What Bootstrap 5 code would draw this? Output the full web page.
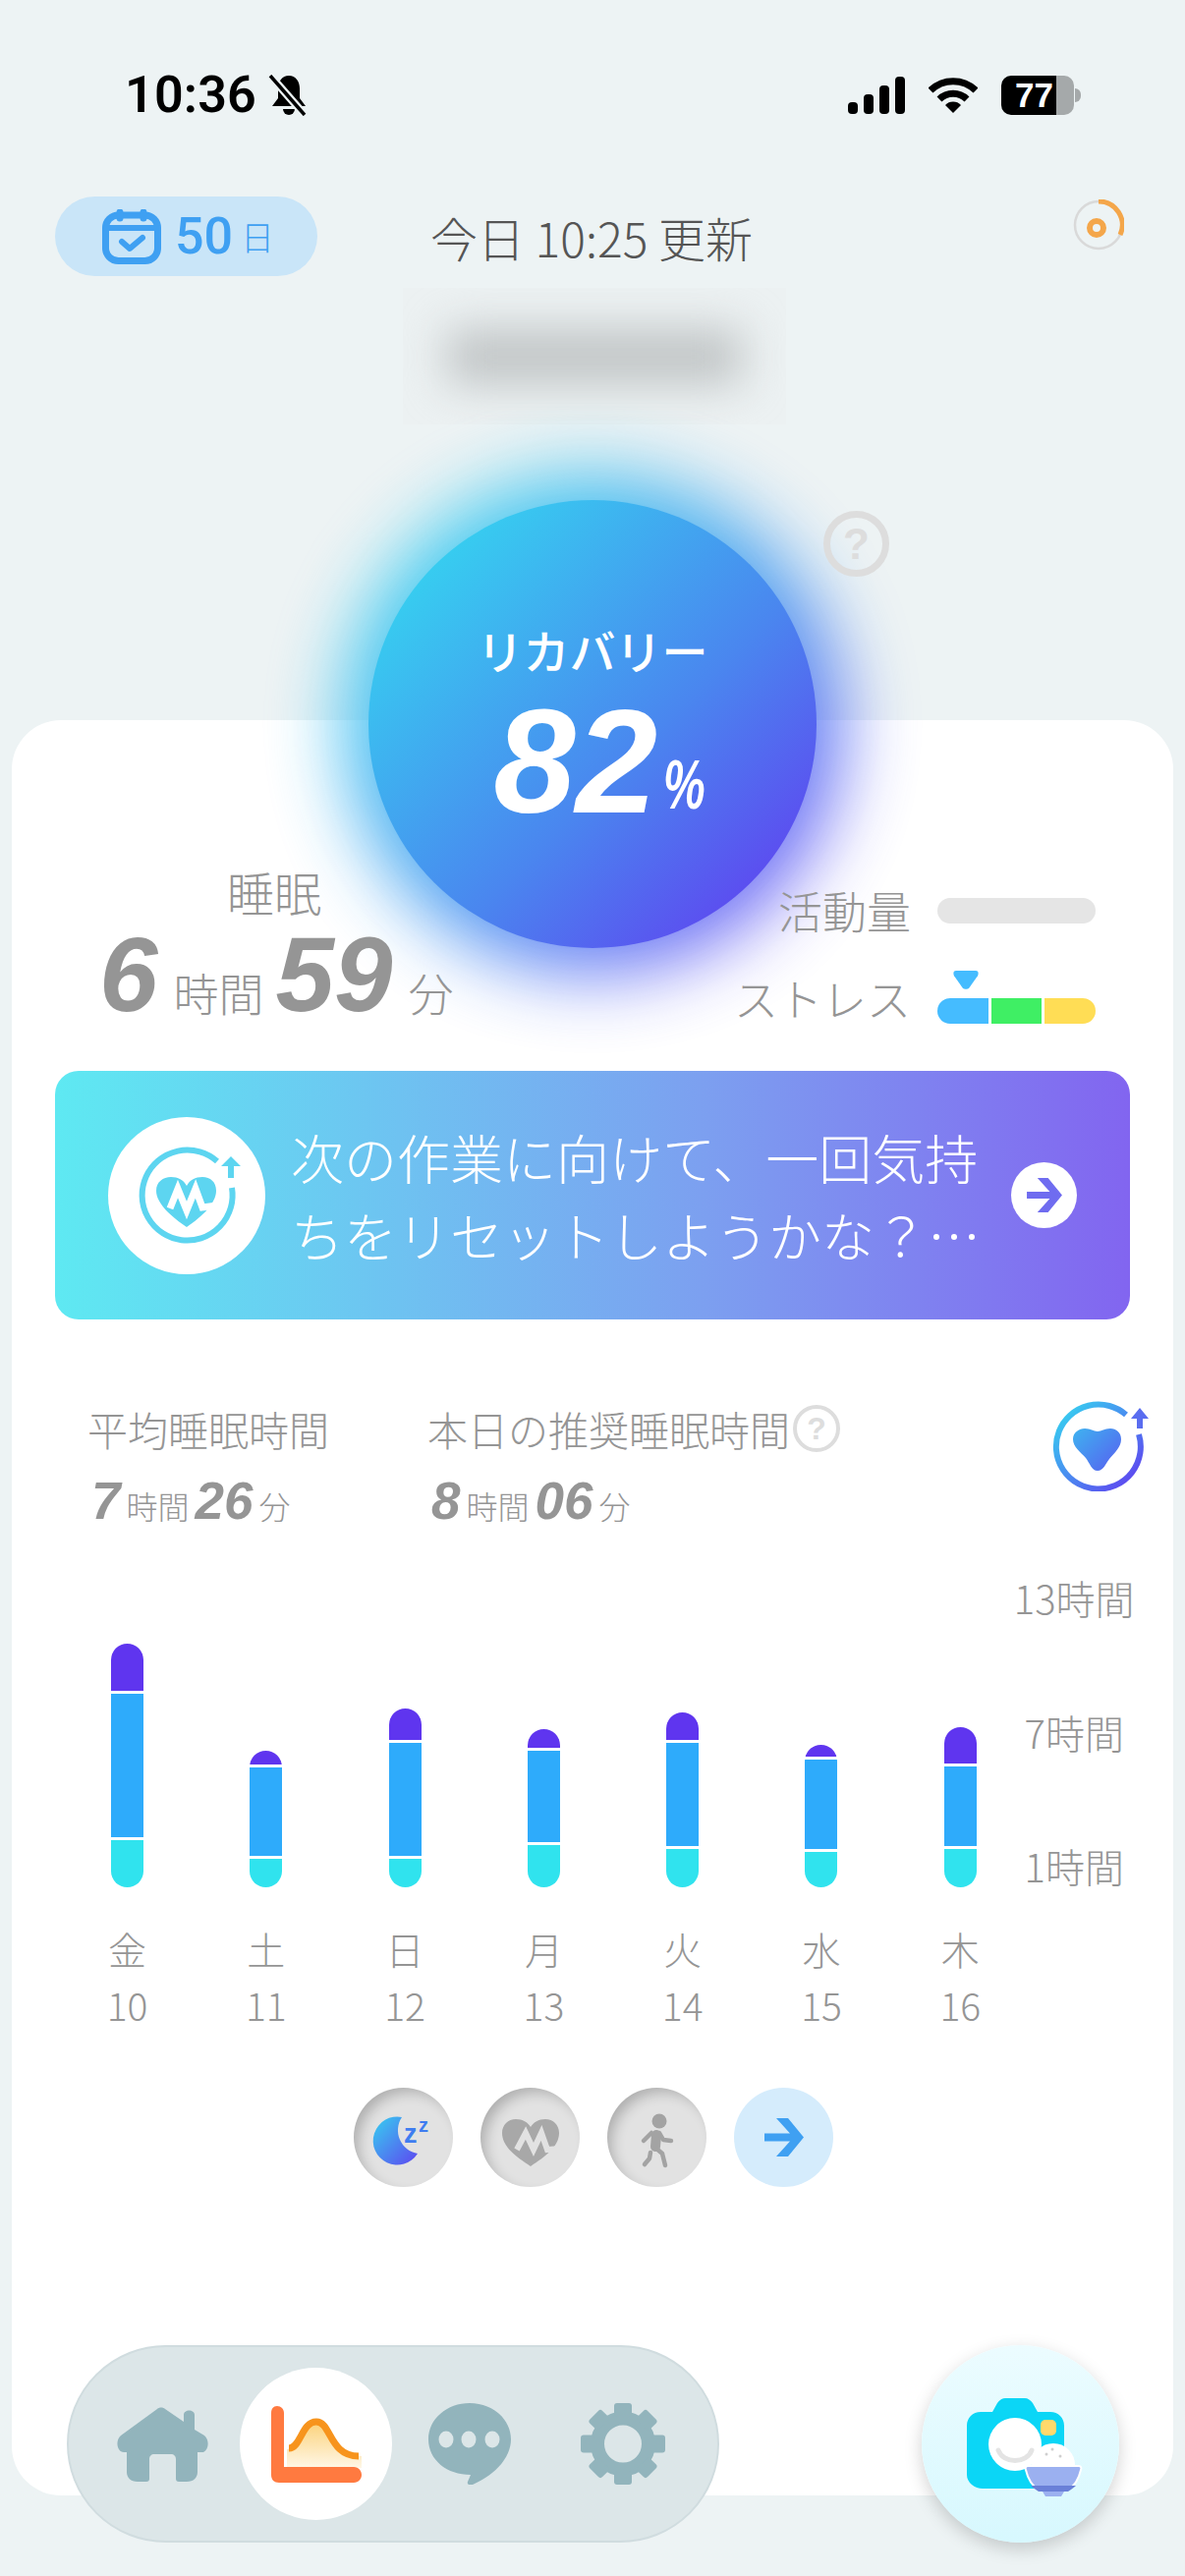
<!DOCTYPE html>
<html lang="ja">
<head>
  <meta charset="UTF-8">
  <title>リカバリー</title>
  <meta name="viewport" content="width=device-width, initial-scale=1">
  <link href="https://cdn.jsdelivr.net/npm/bootstrap@5.3.3/dist/css/bootstrap.min.css" rel="stylesheet">
  <style>
    body {
      width: 1206px;
      height: 2622px;
      overflow: hidden;
      background: #edf3f4;
      font-family: "Noto Sans CJK JP", "Noto Sans", sans-serif;
      font-weight: 300;
      color: #959595;
    }
    .page-shell { position: relative; width: 1206px; height: 2622px; overflow: hidden; }

    /* status bar */
    .status-row { height: 40px; margin-top: 77px; padding: 0 106px 0 127px; color: #000; }
    .status-time { font: 600 52px/40px Roboto, sans-serif; letter-spacing: .2px; color: #000; }
    .batt-box {
      width: 74px; height: 40px; border-radius: 10px; padding-left: 14px;
      background: linear-gradient(90deg, #000 76%, #a5a9aa 76%);
      font: 700 35px/40px "Liberation Sans", sans-serif; color: #fff;
    }
    .batt-nub { width: 6px; height: 14px; margin-left: 1px; border-radius: 0 6px 6px 0; background: #a5a9aa; }
    .bell-mark { margin-left: 12px; }

    /* top row */
    .top-row { height: 81px; margin-top: 83px; padding-left: 56px; }
    .day-pill { width: 267px; height: 81px; background: #c9e5f8; color: #3fa0f2; padding-left: 48px; }
    .day-num { font: 500 52px/1 Roboto, sans-serif; margin-left: 14px; }
    .day-unit { font-size: 34px; line-height: 1; margin-left: 8px; font-weight: 300; }
    .updated-text { font-size: 48px; line-height: 1; color: #555; margin-left: 115px; }
    .sync-ring { margin-left: auto; margin-right: 62px; align-self: flex-start; margin-top: 3px; }

    /* blurred name */
    .name-patch { width: 390px; height: 139px; margin: 12px 0 0 410px; background: #ecf1f2; overflow: hidden; }
    .name-blur { width: 300px; height: 56px; margin: 42px 0 0 45px; background: #c0c4c5; filter: blur(22px); }

    /* recovery disc */
    .hero-glow {
      position: absolute; left: 349px; top: 483px; width: 508px; height: 508px; border-radius: 50%;
      background: linear-gradient(135deg, #36d6f0 10%, #3f9df0 50%, #6a4cf5 90%);
      filter: blur(38px);
      opacity: .92;
    }
    .hero-disc {
      position: absolute; left: 375px; top: 509px; width: 456px; height: 456px;
      background: linear-gradient(135deg, #36d0f0 12%, #4a86ef 58%, #5e46f0 90%);
      color: #fff;
    }
    .hero-title { font-size: 47px; line-height: 1; font-weight: 500; margin-top: 128px; }
    .hero-value { font: italic 700 150px/1 "Liberation Sans", sans-serif; margin-top: 16px; padding-left: 14px; }
    .hero-percent { display: inline-block; font: italic 700 48px/1 "Liberation Sans", sans-serif; margin-left: 6px; transform: scaleY(1.45); transform-origin: bottom; }
    .help-mark {
      position: absolute; left: 838px; top: 520px; width: 67px; height: 67px;
      border: 7px solid #ddd; color: #ddd; font: 700 44px/1 "Liberation Sans", sans-serif;
    }

    /* main sheet */
    .main-sheet {
      position: relative; width: 1182px; height: 1807px; margin: 301px 0 0 12px;
      padding: 156px 44px 0; background: #fff; border-radius: 50px;
    }
    .stats-row { position: relative; z-index: 3; height: 201px; }
    .sleep-box { margin-left: 45px; width: 370px; margin-top: -6px; }
    .sleep-title { font-size: 48px; line-height: 48px; padding-right: 14px; margin-bottom: 9px; }
    .big-num { font: italic 700 107px/104px "Liberation Sans", sans-serif; }
    .big-unit { font-size: 46px; line-height: 1; margin: 0 12px 0 16px; white-space: nowrap; }
    .side-box { margin-right: 35px; padding-top: 15px; }
    .side-label { font-size: 45px; line-height: 46px; }
    .side-track { width: 161px; height: 26px; margin-left: 27px; }
    .track-blank { background: #e5e5e5; }
    .stress-row { margin-top: 40px; position: relative; }
    .stress-bar { overflow: hidden; gap: 3px; margin-top: 26px; }
    .stress-bar span { flex: 1; }
    .stress-pin { position: absolute; left: 223px; top: -2px; }

    /* advice banner */
    .advice-banner {
      height: 253px; padding: 0 54px; border-radius: 24px; color: #fff;
      background: linear-gradient(90deg, #5ee9f2, #7ca0f0 60%, #8265f0);
    }
    .advice-mark { width: 160px; height: 160px; flex: none; background: #fff; }
    .advice-text { width: 706px; margin-left: 26px; font-size: 54px; line-height: 79px; white-space: nowrap; }
    .advice-go { width: 67px; height: 67px; margin-left: 28px; flex: none; background: #fff; }

    /* sleep summary */
    .summary-row { height: 180px; margin-top: 87px; padding-left: 33px; }
    .summary-col-a { width: 346px; }
    .summary-head { font-size: 41px; line-height: 48px; white-space: nowrap; }
    .summary-help {
      width: 48px; height: 48px; margin-left: 3px; border: 4px solid #ddd; color: #ddd;
      font: 700 32px/1 "Liberation Sans", sans-serif;
    }
    .summary-vals { margin-top: 25px; margin-left: 4px; height: 50px; }
    .mid-num { font: italic 700 53px/50px "Liberation Sans", sans-serif; }
    .mid-unit { font-size: 32px; line-height: 1; margin: 0 6px; }
    .summary-heart { position: absolute; left: 1058px; top: 692px; }

    /* chart */
    .day-cols { margin-left: 57px; gap: 108.3px; }
    .day-col { width: 33px; }
    .bar-slot { height: 311px; }
    .sleep-bar { width: 33px; gap: 3px; border-radius: 17px; overflow: hidden; }
    .bar-deep { background: #5f35ef; }
    .bar-light { background: #2eabfb; }
    .bar-wake { background: #30e3ee; }
    .day-label { margin-top: 34px; font-size: 39px; line-height: 57px; white-space: nowrap; }
    .hour-col { width: 124px; margin-left: 38px; margin-top: -4px; gap: 96.5px; font-size: 40px; line-height: 40px; white-space: nowrap; }

    /* metric buttons */
    .metric-row { gap: 28px; margin-top: 56px; padding-left: 2px; }
    .metric-btn { width: 101px; height: 101px; background: #e2e2e2; box-shadow: inset 7px 7px 14px -3px rgba(0,0,0,.24); }
    .metric-next { background: #d5ecfc; box-shadow: none; }

    /* dock */
    .dock-row { position: relative; z-index: 4; margin-top: -153px; padding: 0 67px 0 68px; }
    .tab-dock { width: 664px; height: 201px; background: #dce6e8; border: 2px solid #d0dcdf; padding-left: 49px; }
    .tab-item { width: 155px; height: 155px; flex: none; margin-left: -1px; }
    .tab-active { background: #fff; }
    .tab-first { width: 96px; margin-left: 0; margin-right: 30px; justify-content: flex-start !important; }
    .tab-chat { margin-left: 37px; }
    .tab-gear { margin-left: 71px; }
    .camera-btn {
      width: 201px; height: 201px; padding: 54px 0 0 45px;
      background: linear-gradient(180deg, #ecfcff, #d7f8fe);
      box-shadow: 0 6px 18px rgba(0,0,0,.18);
    }
  </style>
</head>
<body>
<div class="page-shell">

  <!-- status bar -->
  <div class="status-row d-flex align-items-center">
    <span class="status-time">10:36</span>
    <svg class="bell-mark" width="42" height="42" viewBox="0 0 42 42">
      <path d="M21 1c-7 0-11 6-11 13v10l-6 8h34l-6-8V14c0-7-4-13-11-13z" fill="#000"/>
      <path d="M15 35h12a6 6 0 0 1-12 0z" fill="#000"/>
      <path d="M3 2l34 39" stroke="#edf3f4" stroke-width="8"/>
      <path d="M2 1l35 40" stroke="#000" stroke-width="3.500"/>
    </svg>
    <div class="ms-auto d-flex align-items-center">
      <svg width="58" height="38" viewBox="0 0 58 38">
        <rect x="0" y="26" width="10" height="12" rx="4"/>
        <rect x="16" y="18" width="10" height="20" rx="4"/>
        <rect x="32" y="9" width="10" height="29" rx="4"/>
        <rect x="48" y="0" width="10" height="38" rx="4"/>
      </svg>
      <svg class="ms-4" width="50" height="38" viewBox="0 0 50 38" fill="none" stroke="#000" stroke-width="7">
        <path d="M2 14a33 33 0 0 1 46 0"/>
        <path d="M11 23a20 20 0 0 1 28 0"/>
        <path d="M25 37l-8-8a11 11 0 0 1 16 0z" fill="#000" stroke="none"/>
      </svg>
      <div class="batt-box ms-4">77</div>
      <div class="batt-nub"></div>
    </div>
  </div>

  <!-- streak and updated time -->
  <div class="top-row d-flex align-items-center">
    <div class="day-pill rounded-pill d-flex align-items-center">
      <svg width="60" height="56" viewBox="0 0 60 56" fill="none" stroke="#3fa0f2" stroke-width="7" stroke-linecap="round" stroke-linejoin="round">
        <rect x="3.5" y="6" width="53" height="46.500" rx="13"/>
        <path d="M3.500 19h53" stroke-width="6"/>
        <path d="M18 3v6M42 3v6" stroke-width="7"/>
        <path d="M20 33l8 7 13-11" stroke-width="6"/>
      </svg>
      <span class="day-num">50</span><span class="day-unit">日</span>
    </div>
    <div class="updated-text">今日 10:25 更新</div>
    <svg class="sync-ring" width="52" height="52" viewBox="0 0 52 52" fill="none">
      <circle cx="26" cy="26" r="24" stroke="#d9d9d9" stroke-width="2.500"/>
      <path d="M26 2a24 24 0 0 1 22 34" stroke="#f4a64a" stroke-width="5"/>
      <circle cx="24" cy="29" r="7" stroke="#f4a64a" stroke-width="6"/>
    </svg>
  </div>

  <!-- blurred name -->
  <div class="name-patch"><div class="name-blur"></div></div>

  <!-- recovery sheet -->
  <div class="main-sheet">
    <div class="stats-row d-flex justify-content-between">
      <div class="sleep-box text-center">
        <div class="sleep-title">睡眠</div>
        <div class="d-flex align-items-baseline">
          <span class="big-num">6</span><span class="big-unit">時間</span><span class="big-num">59</span><span class="big-unit">分</span>
        </div>
      </div>
      <div class="side-box">
        <div class="d-flex align-items-center justify-content-end">
          <span class="side-label">活動量</span>
          <div class="side-track track-blank rounded-pill"></div>
        </div>
        <div class="stress-row d-flex align-items-center justify-content-end">
          <span class="side-label">ストレス</span>
          <div class="side-track stress-bar rounded-pill d-flex">
            <span style="background:#45bcff"></span><span style="background:#3fef64"></span><span style="background:#ffdd55"></span>
          </div>
          <svg class="stress-pin" width="26" height="19" viewBox="0 0 26 18" preserveAspectRatio="none"><path d="M3 0h20c3 0 3 3 2 5l-9 12c-1 1-5 1-6 0L1 5C0 3 0 0 3 0z" fill="#45bcff"/></svg>
        </div>
      </div>
    </div>

    <div class="advice-banner d-flex align-items-center">
      <div class="advice-mark rounded-circle">
        <svg width="160" height="160" viewBox="0 0 160 160" fill="none">
          <path d="M111 45A46 46 0 1 0 126 72" stroke="#5dd5f0" stroke-width="6"/>
          <path d="M80 112C65 102 49 88 49 75c0-9 7-14 15-14 7 0 13 3 16 9 3-6 9-9 16-9 8 0 14 5 14 14 0 13-15 27-30 37z" fill="#5dd5f0"/>
          <path d="M63 93l8-20 9 22 9-22 7 19 15-2" stroke="#fff" stroke-width="7"/>
          <path d="M115 50l10-10 10 10h-7v12h-6V50z" fill="#5dd5f0"/>
        </svg>
      </div>
      <div class="advice-text">次の作業に向けて、一回気持<br>ちをリセットしようかな？…</div>
      <div class="advice-go rounded-circle d-flex align-items-center justify-content-center">
        <svg width="36" height="35" viewBox="0 0 40 39"><path d="M12 0h12l16 19.500L24 39H12l14-15.500H0v-8h26z" fill="#6f6cf0"/></svg>
      </div>
    </div>

    <div class="summary-row d-flex">
      <div class="summary-col-a">
        <div class="summary-head">平均睡眠時間</div>
        <div class="summary-vals d-flex align-items-baseline">
          <span class="mid-num">7</span><span class="mid-unit">時間</span><span class="mid-num">26</span><span class="mid-unit">分</span>
        </div>
      </div>
      <div>
        <div class="summary-head d-flex align-items-center">本日の推奨睡眠時間<span class="summary-help rounded-circle d-flex align-items-center justify-content-center">?</span></div>
        <div class="summary-vals d-flex align-items-baseline">
          <span class="mid-num">8</span><span class="mid-unit">時間</span><span class="mid-num">06</span><span class="mid-unit">分</span>
        </div>
      </div>
    </div>
    <svg class="summary-heart" width="100" height="93" viewBox="0 0 100 93" fill="none">
      <defs>
        <linearGradient id="ringFill" gradientUnits="userSpaceOnUse" x1="10" y1="10" x2="84" y2="84">
          <stop offset="0" stop-color="#36d0f0"/><stop offset="1" stop-color="#5e46f0"/>
        </linearGradient>
      </defs>
      <path d="M76 15A43 43 0 1 0 89 35" stroke="url(#ringFill)" stroke-width="6"/>
      <path d="M47 72c-6 0-8-8-12-13-5-6-13-11-13-19 0-7 6-11 12-11 6 0 9 3 13 3s7-3 13-3c6 0 11 4 11 11 0 8-7 14-12 20-4 5-6 12-12 12z" fill="url(#ringFill)"/>
      <path d="M81 19l9-11 9 11h-6v10h-6V19z" fill="#5a6df0"/>
    </svg>

    <div class="d-flex">
      <div class="day-cols d-flex" id="dayCols"></div>
      <div class="hour-col d-flex flex-column text-center">
        <div>13時間</div><div>7時間</div><div>1時間</div>
      </div>
    </div>

    <div class="metric-row d-flex justify-content-center">
      <div class="metric-btn rounded-circle">
        <svg width="101" height="101" viewBox="0 0 101 101">
          <defs>
            <linearGradient id="moonFill" x1="0" y1="0" x2="1" y2="1">
              <stop offset="0" stop-color="#36d0f0"/><stop offset="1" stop-color="#5e46f0"/>
            </linearGradient>
          </defs>
          <path d="M49 30A24.500 24.500 0 1 0 65 67 24 24 0 0 1 49 30z" fill="url(#moonFill)"/>
          <text x="51" y="56" font-family="Liberation Sans" font-weight="700" font-size="27" fill="#3f7df0">z</text>
          <text x="66" y="45" font-family="Liberation Sans" font-weight="700" font-size="20" fill="#3f7df0">z</text>
        </svg>
      </div>
      <div class="metric-btn rounded-circle">
        <svg width="101" height="101" viewBox="0 0 101 101" fill="none">
          <path d="M51 80C36 70 22 60 22 46c0-8 6-14 14-14 7 0 12 3 15 8 3-5 8-8 15-8 8 0 14 6 14 14 0 14-14 24-29 34z" fill="#a8a8a8"/>
          <path d="M37 63l9-17 8 17 8-17 6 17 14-1" stroke="#e2e2e2" stroke-width="6"/>
        </svg>
      </div>
      <div class="metric-btn rounded-circle">
        <svg width="101" height="101" viewBox="0 0 101 101" fill="none" stroke="#a3a3a3" stroke-linecap="round" stroke-linejoin="round">
          <circle cx="53" cy="34" r="7.500" fill="#a3a3a3" stroke="none"/>
          <path d="M50 48l-1 12" stroke-width="10"/>
          <path d="M37 54l8-8M53 46l4 7 8 1M49 61l7 6 3 12M44 66l-1 6-5 6" stroke-width="4.500"/>
        </svg>
      </div>
      <div class="metric-btn metric-next rounded-circle d-flex align-items-center justify-content-center">
        <svg width="40" height="39" viewBox="0 0 40 39"><path d="M12 0h12l16 19.500L24 39H12l14-15.500H0v-8h26z" fill="#3fa0f2"/></svg>
      </div>
    </div>
  </div>

  <!-- bottom dock -->
  <div class="dock-row d-flex justify-content-between">
    <div class="tab-dock rounded-pill d-flex align-items-center">
      <div class="tab-item tab-first d-flex align-items-center">
        <svg width="93" height="76" viewBox="0 0 93 76">
          <path d="M41 2c2-2 6-2 8 0l19 13V8c0-6 11-6 11 0v15l10 6c5 4 5 14-1 17h-6v20c0 6-4 10-11 10h-8c-2 0-3-1-3-3V53c0-3-2-5-5-5H38c-3 0-5 2-5 5v20c0 2-1 3-3 3h-9c-7 0-11-4-11-10V46H7C0 46-2 34 4 29z" fill="#92b4bc"/>
        </svg>
      </div>
      <div class="tab-item tab-active rounded-circle d-flex align-items-center justify-content-center">
        <svg width="92" height="78" viewBox="0 0 92 78" fill="none">
          <defs>
            <linearGradient id="areaFill" x1="0" y1="0" x2="0" y2="1">
              <stop offset="0" stop-color="#fbd27a"/><stop offset="1" stop-color="#fff7e6"/>
            </linearGradient>
          </defs>
          <path d="M16 44c12 0 14-28 30-28s14 35 46 35v12H16z" fill="url(#areaFill)"/>
          <path d="M18 43c12 0 13-27 28-27s13 35 43 35" stroke="#f7941d" stroke-width="7"/>
          <path d="M6 0c4 0 7 3 7 7v55h71c5 0 8 4 8 8s-3 8-8 8H8c-5 0-8-3-8-8V7c0-4 2-7 6-7z" fill="#ff7a40"/>
        </svg>
      </div>
      <div class="tab-chat">
        <svg width="84" height="83" viewBox="0 0 84 83">
          <path d="M42 0c23 0 42 16 42 37 0 17-14 35-39 46-3 1-6 0-5-3l3-7C19 73 0 58 0 37 0 16 19 0 42 0z" fill="#92b4bc"/>
          <g fill="#dce6e8"><ellipse cx="18" cy="37" rx="7.500" ry="8.500"/><ellipse cx="41" cy="37" rx="7.500" ry="8.500"/><ellipse cx="65" cy="37" rx="7.500" ry="8.500"/></g>
        </svg>
      </div>
      <div class="tab-gear">
        <svg width="86" height="83" viewBox="0 0 86 83" fill="#92b4bc">
          <circle cx="43" cy="41.500" r="26" fill="none" stroke="#92b4bc" stroke-width="14"/>
          <g>
            <rect x="34" y="0" width="18" height="14" rx="3"/>
            <rect x="34" y="69" width="18" height="14" rx="3"/>
            <rect x="0" y="32.500" width="14" height="18" rx="3"/>
            <rect x="72" y="32.500" width="14" height="18" rx="3"/>
            <rect x="34" y="0" width="18" height="14" rx="3" transform="rotate(45 43 41.500)"/>
            <rect x="34" y="0" width="18" height="14" rx="3" transform="rotate(135 43 41.500)"/>
            <rect x="34" y="0" width="18" height="14" rx="3" transform="rotate(225 43 41.500)"/>
            <rect x="34" y="0" width="18" height="14" rx="3" transform="rotate(315 43 41.500)"/>
          </g>
        </svg>
      </div>
    </div>
    <div class="camera-btn rounded-circle">
      <svg width="120" height="100" viewBox="0 0 120 100">
        <path d="M15 14h12l5-9c2-3 5-5 8-5h20c3 0 6 2 8 5l5 9h13c8 0 14 6 14 14v50c0 8-6 14-14 14H17C9 92 1 86 1 78V28c0-8 6-14 14-14z" fill="#0bd6f6"/>
        <circle cx="50" cy="47" r="27" fill="#fff"/>
        <path d="M33 53c5 14 29 14 34 0" fill="none" stroke="#e4e4e4" stroke-width="5" stroke-linecap="round"/>
        <rect x="76" y="22" width="16" height="16" rx="5" fill="#ffd96b"/>
        <path d="M68 68a21 21 0 0 1 42 0z" fill="#fff" stroke="#fff" stroke-width="2"/>
        <circle cx="82" cy="57" r="1.500" fill="#cfcfcf"/><circle cx="96" cy="59" r="1.500" fill="#cfcfcf"/><circle cx="88" cy="52" r="1.500" fill="#cfcfcf"/>
        <path d="M63 69h52c2 0 3 2 2 4-2 9-7 17-14 21H75c-7-4-12-12-14-21-1-2 0-4 2-4z" fill="#9bb0f0" stroke="#fff" stroke-width="2"/>
        <path d="M66 89h46c-2 2-5 4-8 6H74c-3-2-6-4-8-6z" fill="#6a80d8"/>
        <path d="M78 95h22l-3 5H81z" fill="#9bb0f0"/>
      </svg>
    </div>
  </div>

  <!-- disc sits over the sheet -->
  <div class="hero-glow"></div>
  <div class="hero-disc rounded-circle text-center">
    <div class="hero-title">リカバリー</div>
    <div class="hero-value">82<span class="hero-percent">%</span></div>
  </div>
  <div class="help-mark rounded-circle d-flex align-items-center justify-content-center">?</div>
</div>

<script>
// deep / light / wake heights as drawn, oldest day first
const days = [
  { w: "金", d: 10, p: 48, b: 146, c: 48 },
  { w: "土", d: 11, p: 14, b: 90, c: 29 },
  { w: "日", d: 12, p: 32, b: 115, c: 29 },
  { w: "月", d: 13, p: 19, b: 93, c: 43 },
  { w: "火", d: 14, p: 28, b: 105, c: 39 },
  { w: "水", d: 15, p: 12, b: 91, c: 36 },
  { w: "木", d: 16, p: 37, b: 81, c: 39 }
];

document.getElementById("dayCols").innerHTML = days.map(item => `
  <div class="day-col d-flex flex-column align-items-center">
    <div class="bar-slot d-flex align-items-end">
      <div class="sleep-bar d-flex flex-column">
        <div class="bar-deep" style="height:${item.p}px"></div>
        <div class="bar-light" style="height:${item.b}px"></div>
        <div class="bar-wake" style="height:${item.c}px"></div>
      </div>
    </div>
    <div class="day-label text-center">${item.w}<br>${item.d}</div>
  </div>`).join("");
</script>
<script src="https://cdn.jsdelivr.net/npm/bootstrap@5.3.3/dist/js/bootstrap.bundle.min.js"></script>
</body>
</html>
